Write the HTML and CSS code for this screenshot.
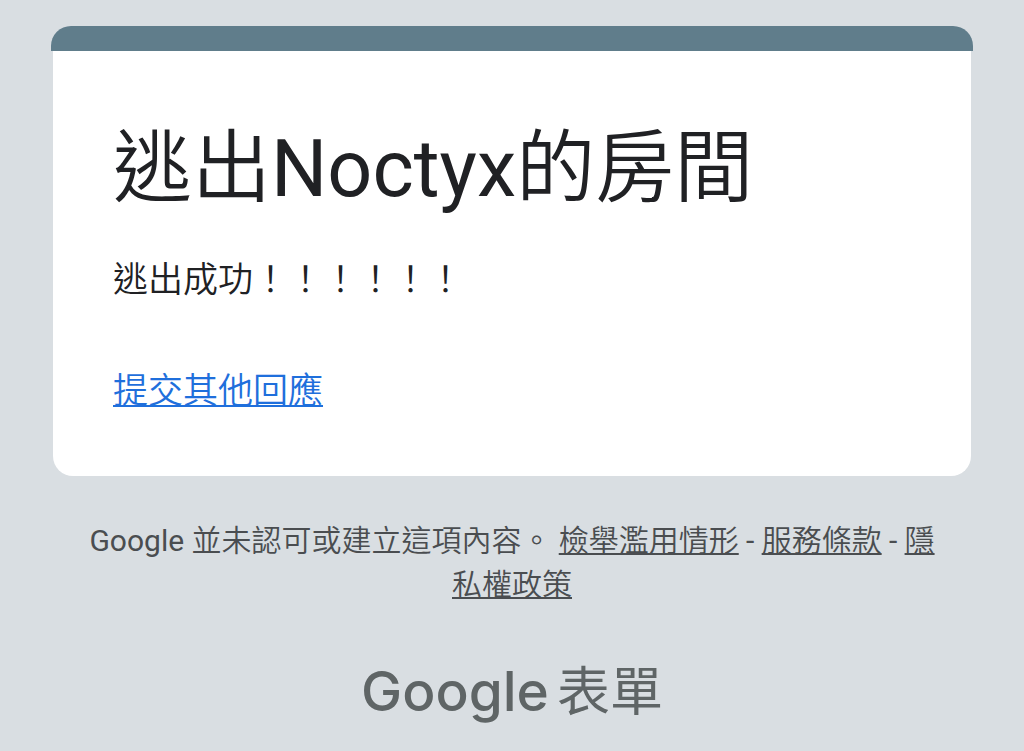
FILE: index.html
```html
<!DOCTYPE html>
<html lang="zh-Hant">
<head>
    <meta charset="UTF-8">
    <meta name="viewport" content="width=device-width, initial-scale=1.0">
    <title>逃出Noctyx的房間</title>
    <link rel="stylesheet" href="styles.css">
</head>
<body>
    <main class="container">
        <div class="theme-bar"></div>
        <div class="card">
            <h1>逃出<span class="latin">Noctyx</span>的房間</h1>
            <p class="message">逃出成功！！！！！！</p>
            <a class="again" href="#">提交其他回應</a>
        </div>
    </main>
    <footer>
        <p class="disclaimer"><span class="latin">Google</span> 並未認可或建立這項內容。 <a href="#">檢舉濫用情形</a> <span class="latin">-</span> <a href="#">服務條款</a> <span class="latin">-</span> <a href="#">隱私權政策</a></p>
        <a class="brand" href="#"><span class="logo">Google</span> <span>表單</span></a>
    </footer>
</body>
</html>
```

FILE: styles.css
```css
body {
    margin: 0;
    padding: 26px 51px 20px;
    background: #d9dee2;
    color: #202124;
    font-family: Roboto, "Noto Sans CJK TC", sans-serif;
    font-weight: 350;
}

a {
    text-decoration-thickness: 2px;
    text-decoration-skip-ink: none;
    text-underline-offset: 2px;
}

.latin {
    font-weight: 400;
}

.theme-bar {
    height: 25px;
    border-radius: 20px 20px 0 0;
    background: #607d8b;
}

.card {
    margin: 0 2px;
    padding: 68px 60px 59px;
    border-radius: 0 0 20px 20px;
    background: #fff;
}

h1 {
    margin: 0;
    font-size: 79px;
    font-weight: 350;
    line-height: 100px;
}

.message {
    margin: 37px 0 61px;
    font-size: 35px;
    line-height: 50px;
}

.again {
    display: block;
    width: fit-content;
    color: #1f6fdc;
    font-size: 35px;
    line-height: 50px;
}

footer {
    padding: 43px 32px 0;
    color: #4a4d50;
    text-align: center;
}

.disclaimer {
    margin: 0;
    font-size: 30px;
    line-height: 44px;
    word-break: break-all;
}

.disclaimer a {
    color: inherit;
}

.brand {
    display: flex;
    justify-content: center;
    align-items: baseline;
    gap: 8px;
    margin-top: 49px;
    color: #5f6566;
    font-size: 53px;
    font-weight: 400;
    line-height: 70px;
    text-decoration: none;
}

.logo {
    font-family: Inter, sans-serif;
    font-size: 55px;
    font-weight: 500;
}
```
